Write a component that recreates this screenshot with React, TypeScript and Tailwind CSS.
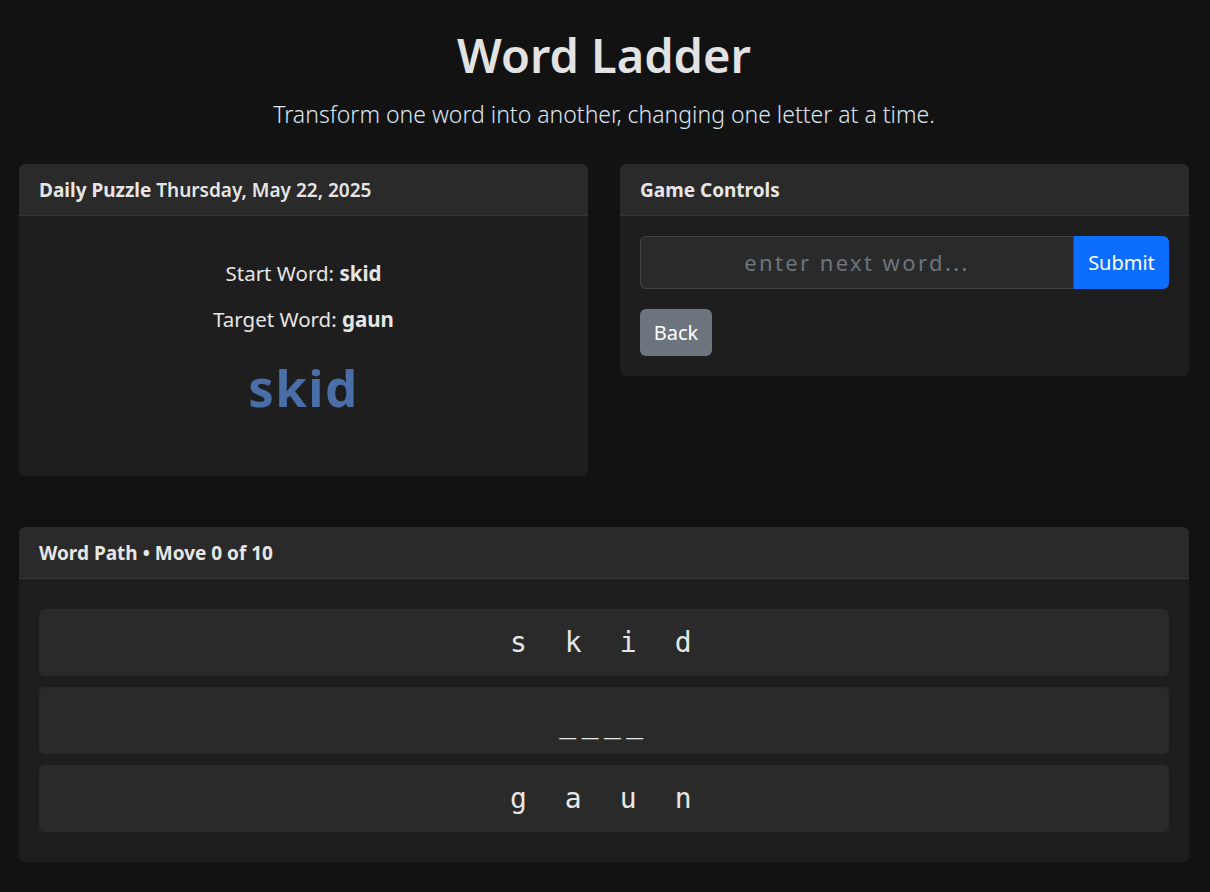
import React from "react";

const sans = { fontFamily: '"Noto Sans", "Open Sans", sans-serif' };
const mono = { fontFamily: '"DejaVu Sans Mono", "Liberation Mono", monospace' };

function Card({ header, children, className = "" }: { header: React.ReactNode; children: React.ReactNode; className?: string }) {
  return (
    <div className={"rounded-[6px] bg-[#1e1e1e] overflow-hidden flex flex-col " + className}>
      <div className="h-[52px] bg-[#2a2a2a] border-b border-[#363636] px-5 pt-[2px] flex items-center text-[19px] text-[#e6e6e6]">
        {header}
      </div>
      {children}
    </div>
  );
}

export default function App() {
  return (
    <div className="min-h-[892px] bg-[#121212] text-[#e0e0e0]" style={sans}>
      <div className="pl-[19px] pr-[21px] pt-[26px] pb-[30px]">
        <h1 className="text-center text-[47px] font-semibold leading-[58px] text-[#e3e3e3]">Word Ladder</h1>
        <p className="text-center text-[23px] font-light leading-[30px] mt-[15px] text-[#dde6f0]">
          Transform one word into another, changing one letter at a time.
        </p>

        <div className="mt-[35px] flex gap-[32px] items-start">
          <Card header={<span><b className="font-bold">Daily Puzzle</b> <span className="font-semibold">Thursday, May 22, 2025</span></span>} className="flex-1 h-[312px]">
            <div className="flex flex-col items-center pt-[43px]">
              <div className="text-[20.5px] leading-[28px] text-[#e6e6e6]">Start Word: <b className="font-bold">skid</b></div>
              <div className="text-[20.5px] leading-[28px] mt-[18px] text-[#e6e6e6]">Target Word: <b className="font-bold">gaun</b></div>
              <div className="text-[51px] font-bold leading-[60px] mt-[24px] tracking-[1.5px] text-[#4a6ea8]">skid</div>
            </div>
          </Card>
          <Card header={<span className="font-bold">Game Controls</span>} className="flex-1">
            <div className="p-5">
              <div className="flex h-[53px]">
                <div className="flex-1 rounded-l-[6px] border border-[#444] bg-[#2a2a2a] flex items-center justify-center text-[22px] tracking-[2.4px] text-[#6c757d]">
                  enter next word...
                </div>
                <button className="w-[95px] rounded-r-[6px] bg-[#0d6efd] text-white text-[20px]">Submit</button>
              </div>
              <button className="mt-[20px] h-[47px] w-[72px] rounded-[6px] bg-[#6c757d] text-white text-[20px]">Back</button>
            </div>
          </Card>
        </div>

        <Card header={<span className="font-bold">Word Path • Move 0 of 10</span>} className="mt-[51px]">
          <div className="px-5 pt-[30px] pb-[30px] flex flex-col gap-[11px]">
            <div className="h-[67px] rounded-[6px] bg-[#2a2a2a] flex items-center justify-center text-[28px] text-[#e6e6e6]" style={mono}>
              <span className="tracking-[10.6px] pl-[4px]">s k i d</span>
            </div>
            <div className="h-[67px] rounded-[6px] bg-[#2a2a2a] flex items-center justify-center text-[28px] text-[#e6e6e6]" style={mono}>
              <span className="tracking-[5.5px] translate-y-[2px]">____</span>
            </div>
            <div className="h-[67px] rounded-[6px] bg-[#2a2a2a] flex items-center justify-center text-[28px] text-[#e6e6e6]" style={mono}>
              <span className="tracking-[10.6px] pl-[4px]">g a u n</span>
            </div>
          </div>
        </Card>
      </div>
    </div>
  );
}
